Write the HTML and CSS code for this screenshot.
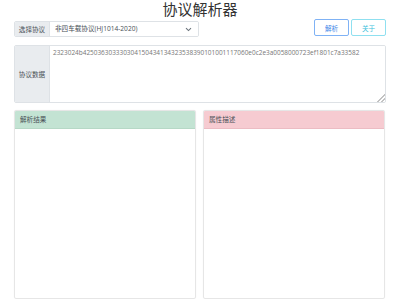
FILE: index.html
```html
<!DOCTYPE html>
<html lang="zh-CN">
<head>
    <meta charset="UTF-8">
    <meta name="viewport" content="width=device-width, initial-scale=1.0">
    <title>协议解析器</title>
    <link rel="stylesheet" href="styles.css">
</head>
<body>
    <div class="container">
        <h1 class="title">协议解析器</h1>

        <div class="toolbar">
            <div class="input-group select-group">
                <span class="group-label">选择协议</span>
                <div class="select-wrap">
                    <select id="protocol">
                        <option>非四车载协议(HJ1014-2020)</option>
                    </select>
                    <svg class="chevron" width="7" height="5" viewBox="0 0 7 5"><path d="M1 1.2 L3.5 3.6 L6 1.2" fill="none" stroke="#6c757d" stroke-width="1.1"/></svg>
                </div>
            </div>
            <div class="actions">
                <button class="btn btn-primary" id="parse">解析</button>
                <button class="btn btn-info" id="about">关于</button>
            </div>
        </div>

        <div class="input-group data-group">
            <span class="group-label">协议数据</span>
            <textarea id="data">2323024b425036303330304150434134323538390101001117060e0c2e3a0058000723ef1801c7a33582</textarea>
        </div>

        <div class="panels">
            <div class="panel">
                <div class="panel-head result">解析结果</div>
                <div class="panel-body" id="result"></div>
            </div>
            <div class="panel">
                <div class="panel-head desc">属性描述</div>
                <div class="panel-body" id="desc"></div>
            </div>
        </div>
    </div>
</body>
</html>
```

FILE: styles.css
```css
* {
    box-sizing: border-box;
}
body {
    margin: 0;
    background-color: #fff;
    color: #495057;
    font-family: "Open Sans", "Noto Sans CJK SC", sans-serif;
}
.container {
    width: 400px;
    padding: 0 14px;
}
.title {
    margin: 0;
    height: 19px;
    line-height: 19px;
    font-size: 15px;
    font-weight: 400;
    text-align: center;
    color: #333;
}
.toolbar {
    display: flex;
    justify-content: space-between;
    align-items: flex-start;
    height: 19px;
}
.input-group {
    display: flex;
    border: 1px solid #dee2e6;
    border-radius: 2px;
    overflow: hidden;
}
.group-label {
    display: flex;
    align-items: center;
    justify-content: center;
    width: 35px;
    flex-shrink: 0;
    background-color: #e9ecef;
    border-right: 1px solid #dee2e6;
    font-size: 6.6px;
    color: #495057;
}
.select-group {
    width: 185px;
    height: 16px;
    margin-top: 2px;
}
.select-wrap {
    position: relative;
    flex: 1;
}
.select-wrap select {
    appearance: none;
    -webkit-appearance: none;
    display: block;
    width: 100%;
    height: 14px;
    line-height: 14px;
    border: none;
    outline: none;
    padding: 0 0 0 5px;
    background: #fff;
    font-family: inherit;
    font-size: 6.6px;
    color: #495057;
}
.chevron {
    position: absolute;
    right: 6px;
    top: 5px;
}
.actions {
    display: flex;
    gap: 2px;
}
.btn {
    width: 35px;
    height: 17px;
    padding: 0;
    background: #fff;
    border: 1px solid;
    border-radius: 2px;
    font-family: inherit;
    font-size: 6.6px;
    cursor: pointer;
}
.btn-primary {
    border-color: #7fb2f5;
    color: #3f86e8;
}
.btn-info {
    border-color: #8fe0f0;
    color: #3cc1dc;
}
.data-group {
    margin-top: 7px;
    height: 58px;
}
#data {
    flex: 1;
    border: none;
    outline: none;
    resize: vertical;
    padding: 2px 3px;
    font-family: inherit;
    font-size: 6.45px;
    line-height: 9px;
    color: #777;
}
#data::-webkit-resizer {
    background: linear-gradient(135deg, transparent 72%, #c2c2c2 72%, #c2c2c2 77%, transparent 77%, transparent 85%, #c2c2c2 85%, #c2c2c2 90%, transparent 90%);
}
.panels {
    display: grid;
    grid-template-columns: 182px 182px;
    gap: 7px;
    margin-top: 7px;
}
.panel {
    height: 189px;
    border: 1px solid #e6e6e6;
    border-radius: 2px;
    box-shadow: 0 0 1px rgba(0, 0, 0, 0.08);
    overflow: hidden;
}
.panel-head {
    height: 18px;
    line-height: 18px;
    padding: 0 5px;
    font-size: 6.6px;
    color: #495057;
}
.panel-head.result {
    background-color: #c3e3d3;
    border-bottom: 1px solid #b6d8c6;
}
.panel-head.desc {
    background-color: #f6cbd1;
    border-bottom: 1px solid #ecbcc3;
}
```
